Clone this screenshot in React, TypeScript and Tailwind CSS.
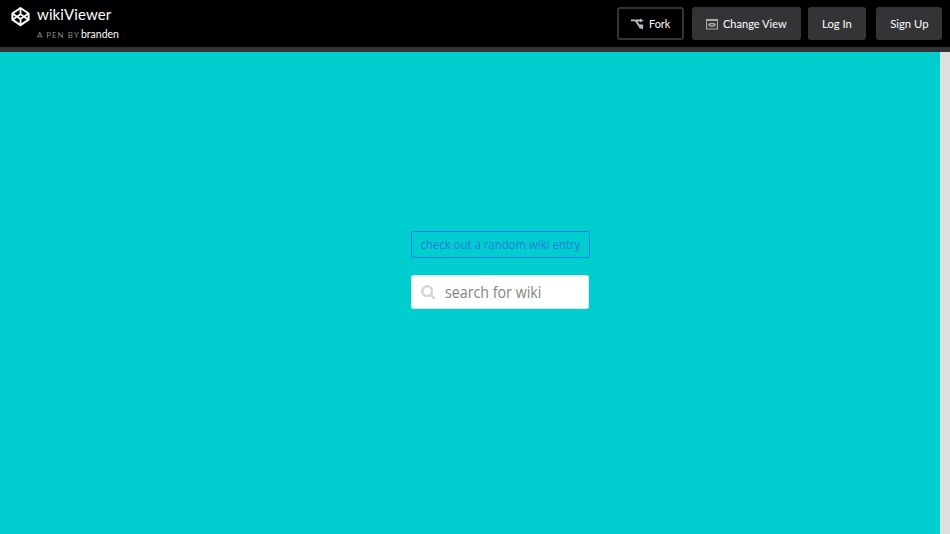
function Logo() {
  return (
    <svg className="ml-[10px] mt-[6px] h-[21px] w-[21px] shrink-0" viewBox="0 0 21 21" fill="none" stroke="#fff" strokeWidth="2" strokeLinejoin="round">
      <path d="M10.500 2 18.600 7.500v6.200l-8.100 5.500L2.400 13.700V7.500z" />
      <path d="M2.400 7.500l8.100 5.500 8.100-5.500M2.400 13.700l8.100-5.500 8.100 5.500M10.500 2v6.200M10.500 13v6.200" strokeWidth="1.800" />
    </svg>
  );
}

function ForkIcon() {
  return (
    <svg className="mt-[1px] h-[12px] w-[13px] shrink-0" viewBox="0 0 13 12" fill="none" stroke="#bbb" strokeWidth="1.800">
      <path d="M0 2.300h3.500c3 0 3 6.200 6.500 6.200M4.500 2.500H10" />
      <path d="M9 .5 12.600 2.500 9 4.500z" fill="#bbb" stroke="none" />
      <path d="M8.500 6.300 12.300 6.700 11.900 11.300 7.900 9.900z" fill="#bbb" stroke="none" />
    </svg>
  );
}

function ViewIcon() {
  return (
    <svg className="mt-[1px] h-[11px] w-[12px] shrink-0" viewBox="0 0 12 11" fill="none" stroke="#aaa" strokeWidth="1.200">
      <path d="M.5.5h11v9.500H.5z" />
      <path d="M0 1h12" strokeWidth="2" />
      <path d="M4.400 4 2.600 5.800l1.800 1.800M7.600 4l1.800 1.800-1.800 1.800" />
      <circle cx="6" cy="5.800" r="1.500" />
    </svg>
  );
}

const button = "flex h-[33px] items-center justify-center whitespace-nowrap rounded-[3px] bg-[#343436] text-[12px] text-white";

export default function App() {
  return (
    <div className="flex h-[534px] w-[950px] flex-col overflow-hidden bg-[#00cece] font-['Lato',sans-serif]">
      <header className="flex h-[52px] shrink-0 border-b-[5px] border-[#343436] bg-black">
        <Logo />
        <div className="ml-[6px] flex flex-col whitespace-nowrap">
          <h1 className="mt-[4px] h-[20px] text-[15px] leading-[20px] tracking-[0.100px] text-white">wikiViewer</h1>
          <div className="mt-[2px] flex h-[16px] items-center text-[8px] leading-[16px] text-[#8b8b8b]">
            <span className="mt-[1px] w-[44px] tracking-[1px]">A PEN BY</span>
            <span className="origin-left scale-x-[0.910] text-[11.500px] text-white">branden</span>
          </div>
        </div>
        <nav className="ml-auto mr-[8px] mt-[7px] flex">
          <button className="flex h-[33px] w-[67px] items-center gap-[5px] rounded-[3px] border-2 border-[#343436] pl-[12px] text-[12px] text-white"><ForkIcon /><span className="mt-[1px] origin-left scale-x-[0.900]">Fork</span></button>
          <button className="ml-[8px] flex h-[33px] w-[109px] items-center gap-[5px] whitespace-nowrap rounded-[3px] bg-[#343436] pl-[14px] text-[12px] text-white"><ViewIcon /><span className="mt-[1px] origin-left scale-x-[0.920]">Change View</span></button>
          <button className={`${button} ml-[7px] w-[58px]`}><span className="mt-[1px] scale-x-[0.930]">Log In</span></button>
          <button className={`${button} ml-[10px] w-[66px]`}><span className="mt-[1px] scale-x-[0.940]">Sign Up</span></button>
        </nav>
      </header>
      <main className="flex flex-1">
        <div className="flex-1 pl-[411px] pt-[179px] font-['Open_Sans',sans-serif]">
          <button className="flex h-[27px] w-[179px] items-center justify-center whitespace-nowrap rounded-[3px] border border-[#2a7cec] text-[13px] text-[#2579e0]"><span className="scale-x-[0.875]">check out a random wiki entry</span></button>
          <div className="mt-[17px] flex h-[34px] w-[178px] items-center rounded-[2px] border border-[#d5e5e5] bg-white pl-[9px]">
            <svg className="h-[15px] w-[15px] shrink-0" viewBox="0 0 15 15" fill="none" stroke="#d4d4d4" strokeWidth="2.400">
              <circle cx="6.200" cy="6.200" r="4.900" /><path d="m9.700 9.700 3.300 3.300" strokeLinecap="round" />
            </svg>
            <input className="ml-[9px] w-[140px] origin-left scale-x-[0.890] bg-transparent text-[16px] text-[#858585] outline-none placeholder:text-[#858585]" placeholder="search for wiki" />
          </div>
        </div>
        <div className="w-[10px] bg-[#dedede]" />
      </main>
    </div>
  );
}
